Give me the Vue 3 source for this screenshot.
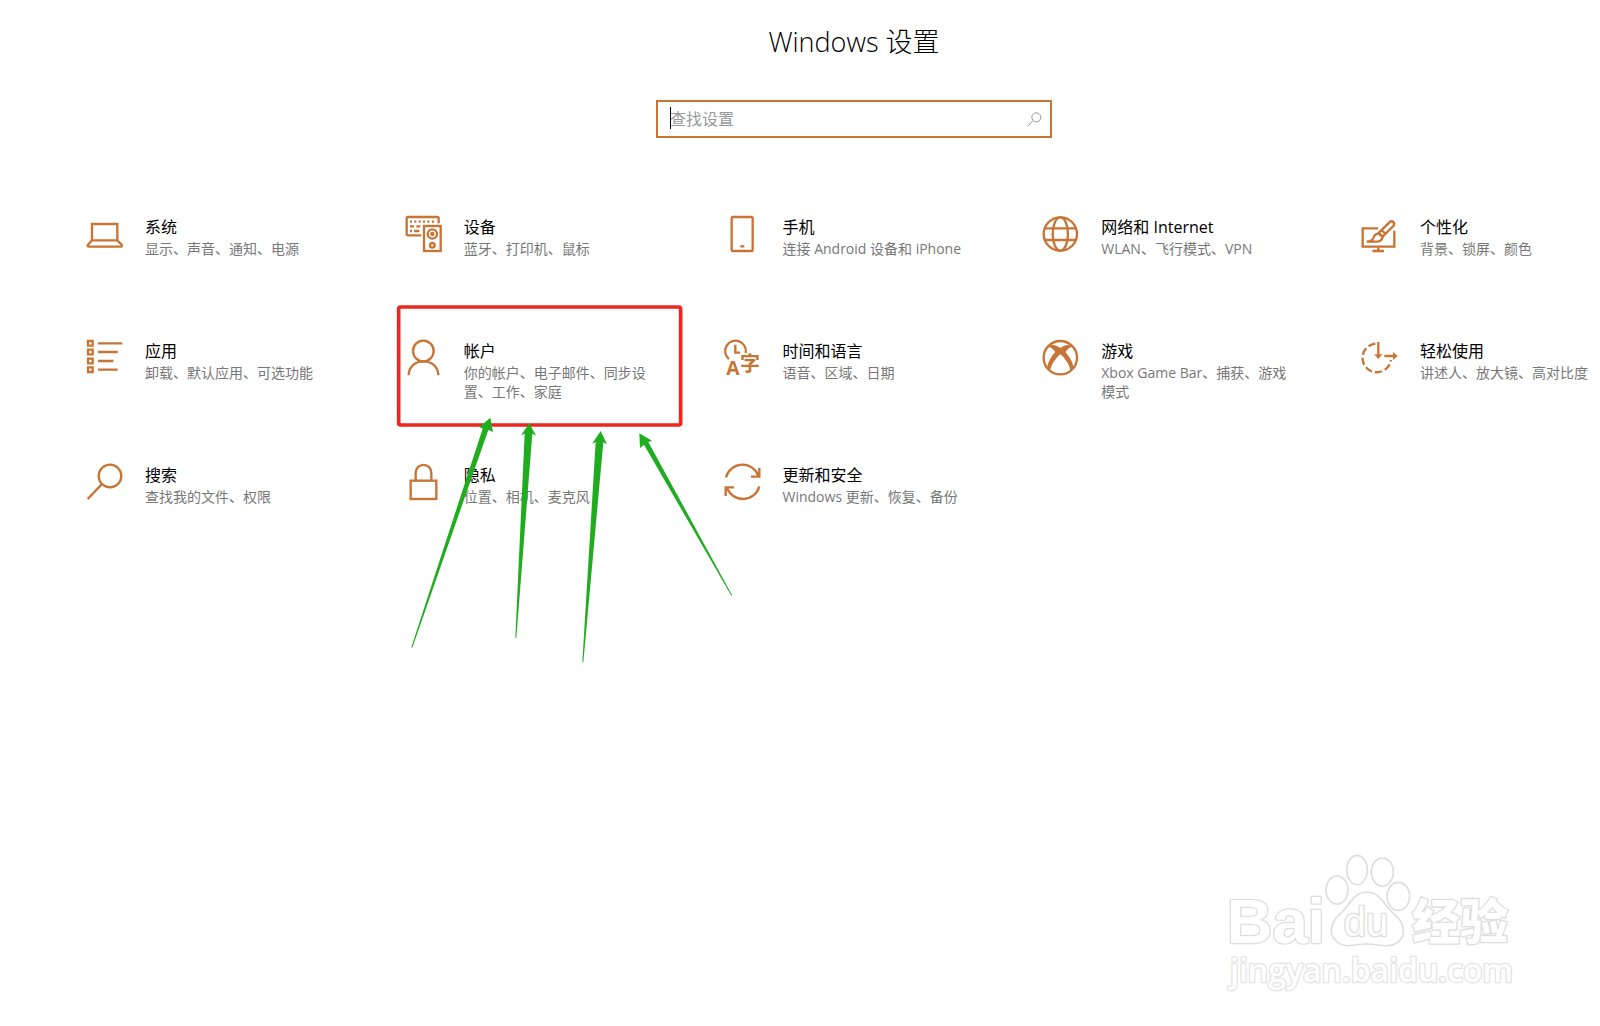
<script setup>
import { ref } from 'vue'

const query = ref('')

const categories = [
  { icon: 'system', title: '系统', text: '显示、声音、通知、电源' },
  { icon: 'devices', title: '设备', text: '蓝牙、打印机、鼠标' },
  { icon: 'phone', title: '手机', text: '连接 Android 设备和 iPhone' },
  { icon: 'network', title: '网络和 Internet', text: 'WLAN、飞行模式、VPN' },
  { icon: 'personal', title: '个性化', text: '背景、锁屏、颜色' },
  { icon: 'apps', title: '应用', text: '卸载、默认应用、可选功能' },
  { icon: 'accounts', title: '帐户', text: '你的帐户、电子邮件、同步设置、工作、家庭' },
  { icon: 'time', title: '时间和语言', text: '语音、区域、日期' },
  { icon: 'gaming', title: '游戏', text: 'Xbox Game Bar、捕获、游戏模式' },
  { icon: 'ease', title: '轻松使用', text: '讲述人、放大镜、高对比度' },
  { icon: 'search', title: '搜索', text: '查找我的文件、权限' },
  { icon: 'privacy', title: '隐私', text: '位置、相机、麦克风' },
  { icon: 'update', title: '更新和安全', text: 'Windows 更新、恢复、备份' }
]
</script>

<template>
  <main class="page">
    <header class="head">
      <h1 class="heading">Windows 设置</h1>
      <form class="search" role="search" @submit.prevent>
        <span class="caret" aria-hidden="true"></span>
        <input v-model="query" class="search-input" type="text" placeholder="查找设置" aria-label="查找设置" />
        <button class="search-button" type="submit" aria-label="搜索">
          <svg viewBox="0 0 45 45" class="search-glyph">
            <circle cx="28" cy="16" r="13.5" />
            <path d="M18 26L2 43" />
          </svg>
        </button>
      </form>
    </header>

    <nav class="grid">
      <a v-for="item in categories" :key="item.icon" class="tile" href="#">
        <svg class="icon" viewBox="0 0 108 108" aria-hidden="true">
          <g v-if="item.icon === 'system'">
            <path d="M15 72V24H91V72M15 73H91L104 86Q107 92 101 92H6Q0 92 3 86L15 73" />
          </g>
          <g v-else-if="item.icon === 'devices'">
            <path d="M46 58H6Q2 58 2 54V7Q2 3 6 3H94Q98 3 98 7V22" />
            <path d="M12 17H18M25 17H31M38 17H44M51 17H57M64 17H70M78 17H84M12 31H24M31 31H43M12 45H18M24 45H40" />
            <rect x="54" y="30" width="50" height="75" />
            <circle cx="79" cy="54" r="14" />
            <circle cx="79" cy="54" r="3" />
            <circle cx="79" cy="88" r="7" />
          </g>
          <g v-else-if="item.icon === 'phone'">
            <rect x="20" y="3" width="63" height="102" rx="4" />
            <path d="M46 91H58" />
          </g>
          <g v-else-if="item.icon === 'network'">
            <circle cx="52" cy="54" r="50" />
            <ellipse cx="52" cy="54" rx="23" ry="50" />
            <path d="M5 37H99M5 72H99" />
          </g>
          <g v-else-if="item.icon === 'personal'">
            <path d="M48 37H2V92H97V44M49 92V104M31 105H66" />
            <path d="M82 19Q88 13 94 18Q99 24 94 30L62 62L50 51ZM58 42L70 53" />
            <path d="M50 52Q37 54 34 66Q31 76 14 77H46Q59 76 62 63Z" />
          </g>
          <g v-else-if="item.icon === 'apps'">
            <path d="M3 3H17V17H3ZM3 29H17V43H3ZM3 56H17V70H3ZM3 82H17V96H3Z" />
            <path d="M33 10H106M33 36H92M33 63H79M33 89H92" />
          </g>
          <g v-else-if="item.icon === 'accounts'">
            <circle cx="52" cy="33" r="31" />
            <path d="M8 106C8 50 97 50 97 106" />
          </g>
          <g v-else-if="item.icon === 'time'">
            <path d="M12 57A31 31 0 1 1 62 39M31 14V38H45" />
            <text x="4" y="105" font-size="58">A</text>
            <text x="45" y="93" font-size="60">字</text>
          </g>
          <g v-else-if="item.icon === 'gaming'">
            <circle cx="52" cy="53" r="50" />
            <path class="solid" d="M16 20C28 10 42 16 52 24C62 16 76 10 88 20C82 20 74 27 67 36C80 50 93 72 90 84L83 93C80 76 66 54 52 43C38 54 24 76 21 93L14 84C11 72 24 50 37 36C30 27 22 20 16 20Z" />
          </g>
          <g v-else-if="item.icon === 'ease'">
            <path d="M40 11A43 43 0 1 0 87 60" stroke-dasharray="22 9" />
            <path d="M49 6V50M67 48H100" />
            <path class="solid" d="M37 43H61L49 57ZM93 36V60L107 48Z" />
          </g>
          <g v-else-if="item.icon === 'search'">
            <circle cx="69" cy="36" r="34" />
            <path d="M44 61L2 105" />
          </g>
          <g v-else-if="item.icon === 'privacy'">
            <rect x="14" y="50" width="77" height="55" />
            <path d="M29 50V26A23 23 0 0 1 76 26V50" />
          </g>
          <g v-else>
            <path d="M3 40A51 51 0 0 1 101 38M103 12V38H78" />
            <path d="M103 67A51 51 0 0 1 5 69M2 96V70H27" />
          </g>
        </svg>
        <span class="label">
          <span class="title">{{ item.title }}</span>
          <span class="text">{{ item.text }}</span>
        </span>
      </a>
    </nav>

    <svg class="marks" viewBox="0 -300 1080 1140" aria-hidden="true">
      <rect x="26" y="-279" width="846" height="354" rx="6" />
      <path d="M301 53L309 96L295 90L67 743L64 742L278 86L268 81Z" />
      <path d="M418 70L438 107L427 101L379 713L376 713L404 101L393 106Z" />
      <path d="M632 93L651 133L640 127L580 787L577 787L617 126L606 131Z" />
      <path d="M748 100L786 122L775 126L1026 585L1024 587L762 134L750 144Z" />
    </svg>

    <svg class="brand" viewBox="0 0 960 510" role="img" aria-label="Baidu 经验">
      <text x="50" y="309" class="latin" font-size="190">Bai</text>
      <ellipse cx="381" cy="150" rx="33" ry="42" />
      <ellipse cx="441" cy="90" rx="31" ry="44" />
      <ellipse cx="517" cy="96" rx="33" ry="42" />
      <ellipse cx="565" cy="169" rx="34" ry="42" />
      <path d="M470 156C510 156 522 196 550 220C588 250 588 290 562 308C532 326 510 312 470 312C430 312 412 326 384 308C356 288 356 250 392 220C420 196 430 156 470 156Z" />
      <text x="401" y="289" class="thin" font-size="120">du</text>
      <text x="606" y="298" class="cjk" font-size="144">经验</text>
      <text x="60" y="425" class="site" font-size="96">jingyan.baidu.com</text>
    </svg>
  </main>
</template>

<style>
body {
  margin: 0;
  background: #fff;
}
</style>

<style scoped>
.page {
  position: relative;
  min-height: 100vh;
  overflow: hidden;
  font-family: "Open Sans", "Noto Sans CJK SC", sans-serif;
  color: #000;
}

.head {
  display: flex;
  flex-direction: column;
  align-items: center;
  gap: 38px;
  padding: 22px 0 0 108px;
}

.heading {
  margin: 0;
  font-size: 27px;
  font-weight: 300;
  line-height: 40px;
}

.search {
  position: relative;
  box-sizing: border-box;
  display: flex;
  align-items: center;
  width: 396px;
  height: 38px;
  padding: 0 8px 0 12px;
  border: 2px solid #c87435;
}

.search-input {
  flex: 1;
  min-width: 0;
  padding: 0;
  border: 0;
  outline: 0;
  background: none;
  font: 400 16px/24px "Open Sans", "Noto Sans CJK SC", sans-serif;
}

.search-input::placeholder {
  color: #999;
  opacity: 1;
}

.caret {
  position: absolute;
  left: 12px;
  top: 5px;
  width: 1px;
  height: 22px;
  background: #000;
}

.search-button {
  display: flex;
  padding: 0;
  border: 0;
  background: none;
}

.search-glyph {
  width: 15px;
  height: 15px;
  fill: none;
  stroke: #999;
  stroke-width: 3;
}

.grid {
  display: grid;
  grid-template-columns: repeat(4, 1fr) 230px;
  grid-auto-rows: 124px;
  padding: 78px 8px 0 87px;
}

.tile {
  display: flex;
  align-items: flex-start;
  gap: 22px;
  color: inherit;
  text-decoration: none;
}

.icon {
  flex: none;
  width: 36px;
  height: 36px;
  overflow: visible;
  fill: none;
  stroke: #c87435;
  stroke-width: 7;
}

.icon .solid {
  fill: #c87435;
  stroke: none;
}

.icon text {
  fill: #c87435;
  stroke: none;
  font-weight: 700;
}

.label {
  display: flex;
  flex-direction: column;
  width: 192px;
}

.title {
  font-size: 16px;
  line-height: 23px;
}

.text {
  font-size: 14px;
  line-height: 19px;
  color: #777;
}

.marks {
  position: absolute;
  left: 390px;
  top: 300px;
  width: 360px;
  height: 380px;
  fill: #1fad1f;
  pointer-events: none;
}

.marks rect {
  fill: none;
  stroke: #ee261b;
  stroke-width: 11;
}

.brand {
  position: absolute;
  right: 70px;
  bottom: 16px;
  width: 320px;
  height: 170px;
  fill: #fff;
  stroke: #dedede;
  stroke-width: 5;
  stroke-linejoin: round;
}

.brand text {
  paint-order: stroke;
  stroke-width: 8;
}

.latin {
  font-family: "Liberation Sans", sans-serif;
  font-weight: 700;
}

.thin {
  font-family: "Liberation Sans", sans-serif;
}

.cjk {
  font-family: "Noto Sans CJK SC", sans-serif;
  font-weight: 900;
}

.brand .site {
  font-family: "Open Sans", sans-serif;
  font-weight: 600;
  stroke: #e4e4e4;
}
</style>
